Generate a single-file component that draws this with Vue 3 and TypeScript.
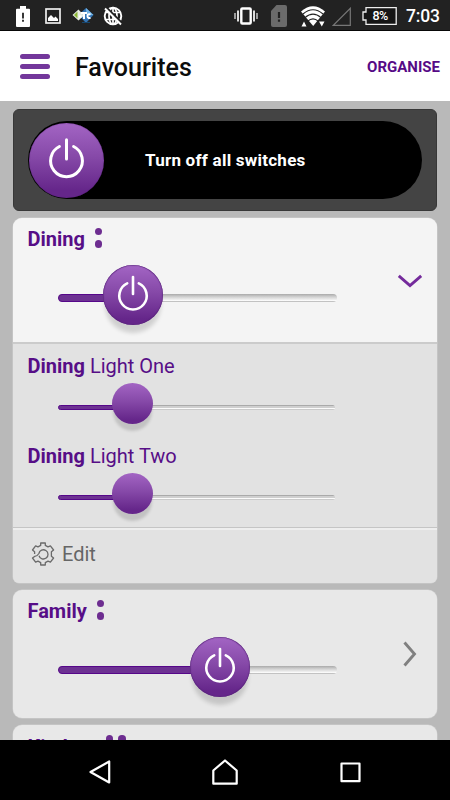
<script setup lang="ts">
interface Room {
  name: string
  level: number
  open: boolean
  dots: 'column' | 'row'
  lights: { name: string; level: number }[]
}

const rooms: Room[] = [
  {
    name: 'Dining',
    level: 26.8,
    open: true,
    dots: 'column',
    lights: [
      { name: 'Light One', level: 26.8 },
      { name: 'Light Two', level: 26.8 },
    ],
  },
  { name: 'Family', level: 57.9, open: false, dots: 'column', lights: [] },
  { name: 'Kitchen', level: 40, open: false, dots: 'row', lights: [] },
]
</script>

<template>
  <div class="screen">
    <div class="status">
      <svg class="s-batt" width="14" height="21" viewBox="0 0 14 22" preserveAspectRatio="none">
        <path d="M4 0h6v3h3q1 0 1 1v17q0 1-1 1H1q-1 0-1-1V4q0-1 1-1h3z" fill="#fff" />
        <path d="M7 7v6M7 14.500v2" stroke="#222" stroke-width="1.800" />
      </svg>
      <svg class="s-pic" width="16" height="16" viewBox="0 0 16 16">
        <rect x="1" y="1" width="14" height="14" fill="none" stroke="#eee" stroke-width="1.700" />
        <path d="M3 13V10l3-3 3 3 1.500-1.500L13 11v2z" fill="#fff" />
      </svg>
      <svg class="s-app" width="22" height="18" viewBox="0 0 22 18">
        <path d="M14 1l7.500 7L14 16 6.500 8z" fill="#3475b5" />
        <path d="M14 1l7.500 7h-7z" fill="#74b4e4" />
        <path d="M6.500 2.500l5.500 6-5.500 5L.500 8z" fill="#e9eee4" />
        <path d="M5.500 4.500v7L2 8z" fill="#8bb735" />
        <path d="M7 9.500h2.500M9 6h6M12 6v6M18.500 7.500q-3-1-3 1.500t3 2" fill="none" stroke="#fff" stroke-width="2" />
        <path d="M10 15.500h8" stroke="#17466e" />
      </svg>
      <svg class="s-globe" width="20" height="20" viewBox="0 0 20 20">
        <circle cx="10" cy="10" r="8.300" fill="none" stroke="#fff" stroke-width="1.900" />
        <ellipse cx="10" cy="10" rx="4" ry="8.300" fill="none" stroke="#fff" stroke-width="1.700" />
        <path d="M10 2v16M3 6.500h14M3 13.500h14" stroke="#fff" stroke-width="1.700" />
        <path d="M3.500 1.500l16 16" stroke="#222" stroke-width="2" />
        <path d="M2 2.500l16 16" stroke="#fff" stroke-width="1.900" />
      </svg>
      <svg class="s-vib" width="24" height="18" viewBox="0 0 24 18">
        <rect x="7.300" y="1.500" width="9.400" height="15" rx="1" fill="none" stroke="#fff" stroke-width="2.400" />
        <path d="M4 3.500v11M20 3.500v11" stroke="#ddd" stroke-width="2" />
        <path d="M1 6v6M23 6v6" stroke="#bbb" stroke-width="1.600" />
      </svg>
      <svg class="s-sim" width="16" height="22" viewBox="0 0 16 22">
        <path d="M5.500 0H14q2 0 2 2v18q0 2-2 2H2q-2 0-2-2V6z" fill="#6b6b6b" />
        <path d="M8 7v6M8 14.500v2.300" stroke="#222" stroke-width="2.200" />
      </svg>
      <svg class="s-wifi" width="24" height="21" viewBox="0 0 24 21">
        <path d="M0 5.500Q12-5 24 5.500L12.200 20z" fill="#fff" />
        <path d="M2 8Q12-.500 22 8M4 11.700Q12 4.500 20 11.700M6.500 15.300q5.500-5 11 0" fill="none" stroke="#222" stroke-width="1.100" />
        <path d="M.500 20.500l2.500-5 2.500 5zM18 15.500h5.500L20.800 20.500z" fill="#fff" />
      </svg>
      <svg class="s-sig" width="19" height="19" viewBox="0 0 19 19">
        <path d="M1.300 18.300H18.300V1.300z" fill="none" stroke="#777" stroke-width="1.200" />
      </svg>
      <div class="percent">
        <svg width="35" height="18" viewBox="0 0 35 18">
          <path d="M4 .700H34.200V17.300H4V13H1V5H4z" fill="#151515" stroke="#eee" stroke-width="1.300" />
        </svg>
        <span>8%</span>
      </div>
      <span class="clock">7:03</span>
    </div>

    <header class="bar">
      <div class="burger"><i /><i /><i /></div>
      <h1>Favourites</h1>
      <span class="organise">ORGANISE</span>
    </header>

    <main class="list">
      <section class="master">
        <div class="pill">
          <div class="knob big">
            <svg viewBox="0 0 75 75" width="75" height="75">
              <path d="M30.400 23.500A15.900 15.900 0 1 0 44.600 23.500" class="power" />
              <path d="M37.500 16.800V36" class="power" />
            </svg>
          </div>
          <span>Turn off all switches</span>
        </div>
      </section>

      <section v-for="room in rooms" :key="room.name" class="card" :class="{ open: room.open }">
        <div class="head">
          <div class="title" :class="{ low: room.dots === 'row' }">
            <b>{{ room.name }}</b>
            <span class="dots" :class="room.dots"><i /><i /></span>
          </div>
          <div class="track">
            <div class="fill" :style="{ width: room.level + '%' }" />
            <div class="knob" :style="{ left: room.level + '%' }">
              <svg viewBox="0 0 60 60" width="60" height="60">
                <path d="M24.200 18.400A13.700 13.700 0 1 0 35.800 18.400" class="power" />
                <path d="M30 12V29" class="power" />
              </svg>
            </div>
          </div>
          <svg v-if="room.open" class="arrow down" width="26" height="15" viewBox="0 0 26 15">
            <path d="M1.800 1.800L13 11.500 24.200 1.800" fill="none" stroke="#742a9b" stroke-width="2.900" />
          </svg>
          <svg v-else class="arrow" width="14" height="26" viewBox="0 0 14 26">
            <path d="M1.500 1.500L11.500 13 1.500 24.500" fill="none" stroke="#808080" stroke-width="2.900" />
          </svg>
        </div>
        <template v-if="room.open">
          <div class="lights">
            <div v-for="light in room.lights" :key="light.name" class="light">
              <div class="title"><b>{{ room.name }}</b>&nbsp;{{ light.name }}</div>
              <div class="track thin">
                <div class="fill" :style="{ width: light.level + '%' }" />
                <div class="knob small" :style="{ left: light.level + '%' }" />
              </div>
            </div>
          </div>
          <div class="edit">
            <svg width="24" height="24" viewBox="0 0 24 24" fill="none" stroke="#6a6a6a" stroke-width="1.300" stroke-linejoin="round">
              <path d="M8 13.700A4.600 4.600 0 1 0 7.900 11.500Q6 14.500 3.600 14.400L1.500 16 4.600 20.200 7 19.200 9.700 20.600V23h4.600V20.600L17 19.200 19.400 20.200 22.600 16 20.400 14.200V9.800L22.600 8 19.400 3.800 17 4.800 14.300 3.400V1H9.700V3.400L7 4.800 4.600 3.800 1.500 8 3.600 9.800V12" />
            </svg>
            <span>Edit</span>
          </div>
        </template>
      </section>
    </main>

    <nav class="nav">
      <svg width="22" height="24" viewBox="0 0 22 24"><path d="M20.200 1.500V22.500L1.500 12z" /></svg>
      <svg width="26" height="26" viewBox="0 0 26 26"><path d="M1.300 24.700V11.500L13 1.500 24.700 11.500V24.700z" /></svg>
      <svg width="21" height="21" viewBox="0 0 21 21"><path d="M1.500 1.500H19.500V19.200H1.500z" /></svg>
    </nav>
  </div>
</template>

<style>
body {
  margin: 0;
  overflow: hidden;
}
</style>

<style scoped>
.screen {
  width: 450px;
  height: 800px;
  display: flex;
  flex-direction: column;
  background: #b9b9b9;
  font-family: Roboto, 'Liberation Sans', sans-serif;
  overflow: hidden;
}
svg {
  display: block;
  flex: none;
}
.status {
  height: 31px;
  flex: none;
  box-sizing: border-box;
  display: flex;
  align-items: center;
  padding: 2px 0 0 15px;
  background: #222;
  border-bottom: 1px solid #080808;
  color: #fff;
}
.s-batt { margin-left: 1px; }
.s-pic { margin-left: 15px; }
.s-app { margin-left: 11px; }
.s-globe { margin-left: 9px; }
.s-vib { margin-left: 111px; }
.s-sim { margin-left: 13px; }
.s-wifi { margin-left: 14px; }
.s-sig { margin-left: 7px; }
.percent {
  display: grid;
  margin-left: 11px;
}
.percent > * {
  grid-area: 1 / 1;
}
.percent span {
  padding-left: 10.500px;
  font-size: 12.5px;
  line-height: 18px;
  font-weight: 500;
  letter-spacing: -0.500px;
}
.clock {
  margin-left: 9px;
  font-size: 17.500px;
  line-height: 22px;
  font-weight: 500;
  letter-spacing: -0.200px;
}
.bar {
  height: 70px;
  flex: none;
  box-sizing: border-box;
  display: flex;
  align-items: center;
  padding: 0 10px 0 20px;
  background: #fff;
}
.burger {
  width: 30px;
  display: flex;
  flex-direction: column;
  gap: 5px;
}
.burger i {
  height: 5px;
  border-radius: 2.500px;
  background: #73379b;
}
h1 {
  flex: 1;
  margin: 4px 0 0 25px;
  font-size: 25px;
  line-height: 30px;
  font-weight: 500;
  color: #0c0c0c;
}
.organise {
  margin-top: 2px;
  font-size: 15px;
  font-weight: 700;
  color: #560a86;
}
.list {
  flex: 1;
  min-height: 0;
  overflow: hidden;
  display: flex;
  flex-direction: column;
  gap: 7px;
  padding: 8px 13px 0;
}
.master {
  height: 102px;
  flex: none;
  box-sizing: border-box;
  padding: 11px 14px;
  border: 1px solid #383838;
  border-radius: 6px;
  background: #444;
}
.pill {
  height: 78px;
  display: flex;
  align-items: center;
  border-radius: 39px;
  background: #000;
  color: #fff;
  font-size: 17px;
  font-weight: 700;
  letter-spacing: 0.240px;
}
.pill span {
  margin-left: 41px;
}
.card {
  flex: none;
  border-radius: 9px;
  background: #e8e8e8;
  box-shadow: 0 0 0 0.500px #cfcfcf;
}
.card.open {
  height: 365px;
  display: flex;
  flex-direction: column;
  border-radius: 9px 9px 6px 6px;
  background: #e2e2e2;
}
.head {
  height: 128px;
  flex: none;
  box-sizing: border-box;
  padding: 9px 15px 0 14.500px;
  display: grid;
  grid-template-columns: 30.500px 279px 1fr;
  grid-template-rows: 24px 1fr;
}
.open .head {
  height: 126px;
  border-bottom: 2px solid #cbcbcb;
  border-radius: 9px 9px 0 0;
  background: #f4f4f4;
}
.title {
  grid-column: 1 / 4;
  display: flex;
  align-items: center;
  font-size: 20px;
  line-height: 24px;
  color: #570e87;
}
.title b {
  font-weight: 700;
}
.title.low b {
  padding-top: 2px;
}
.dots {
  display: flex;
  gap: 5px;
  margin: -3px 0 0 10px;
}
.dots.column {
  flex-direction: column;
}
.dots.row {
  align-self: flex-start;
  margin-top: 1px;
}
.dots i {
  width: 7.500px;
  height: 7.500px;
  border-radius: 50%;
  background: #6d2d90;
}
.track {
  position: relative;
  grid-column: 2;
  height: 8px;
  margin-top: 43px;
  box-sizing: border-box;
  border-radius: 4px;
  background: linear-gradient(#aaa, #d0d0d0 35%, #f2f2f2 75%, #fff 86%, #c2c2c2 88%);
}
.fill {
  height: 8px;
  box-sizing: border-box;
  border: 1px solid #56078a;
  border-radius: 4px;
  background: #6d3292;
}
.knob {
  position: absolute;
  top: -28.700px;
  width: 60px;
  height: 60px;
  margin-left: -30px;
  border-radius: 50%;
  background: linear-gradient(#a365c4, #8649a8 45%, #65268a 90%);
  box-shadow: inset 0 0 1px 0.500px #552177, 0 10px 4px -2px rgba(0, 0, 0, 0.150);
}
.knob.big {
  position: static;
  width: 75px;
  height: 75px;
  margin-left: 1px;
  box-shadow: inset 0 0 1px #552177;
}
.knob.small {
  top: -22px;
  width: 41px;
  height: 41px;
  margin-left: -20.500px;
  box-shadow: 0 8px 3px -1px rgba(0, 0, 0, 0.140);
}
.power {
  fill: none;
  stroke: #fff;
  stroke-width: 2.600;
  stroke-linecap: round;
}
.big .power {
  stroke-width: 3;
}
.arrow {
  grid-column: 3;
  margin: 18px 0 0 66px;
}
.arrow.down {
  margin: 23px 0 0 60px;
}
.lights {
  height: 184px;
  flex: none;
  box-sizing: border-box;
  padding: 10px 14.500px 0;
  border-bottom: 1px solid #c5c5c5;
}
.light {
  height: 90px;
}
.thin {
  width: 277px;
  height: 5px;
  margin: 27px 0 0 30.500px;
  background: linear-gradient(#aaa 20%, #cfcfcf 20% 55%, #fbfbfb 58% 80%, #cacaca 80%);
}
.thin .fill {
  height: 5px;
}
.edit {
  flex: 1;
  display: flex;
  padding: 12px 0 0 18px;
  border-top: 2px solid #eee;
  font-size: 20px;
  line-height: 24px;
  color: #666;
}
.edit span {
  margin-left: 7px;
}
.nav {
  height: 60px;
  flex: none;
  display: flex;
  align-items: center;
  gap: 101px;
  padding: 4px 0 0 89px;
  box-sizing: border-box;
  background: #000;
}
.nav svg + svg + svg {
  margin-left: 1px;
}
.nav path {
  fill: none;
  stroke: #fff;
  stroke-width: 2.200;
  stroke-linejoin: round;
}
</style>
